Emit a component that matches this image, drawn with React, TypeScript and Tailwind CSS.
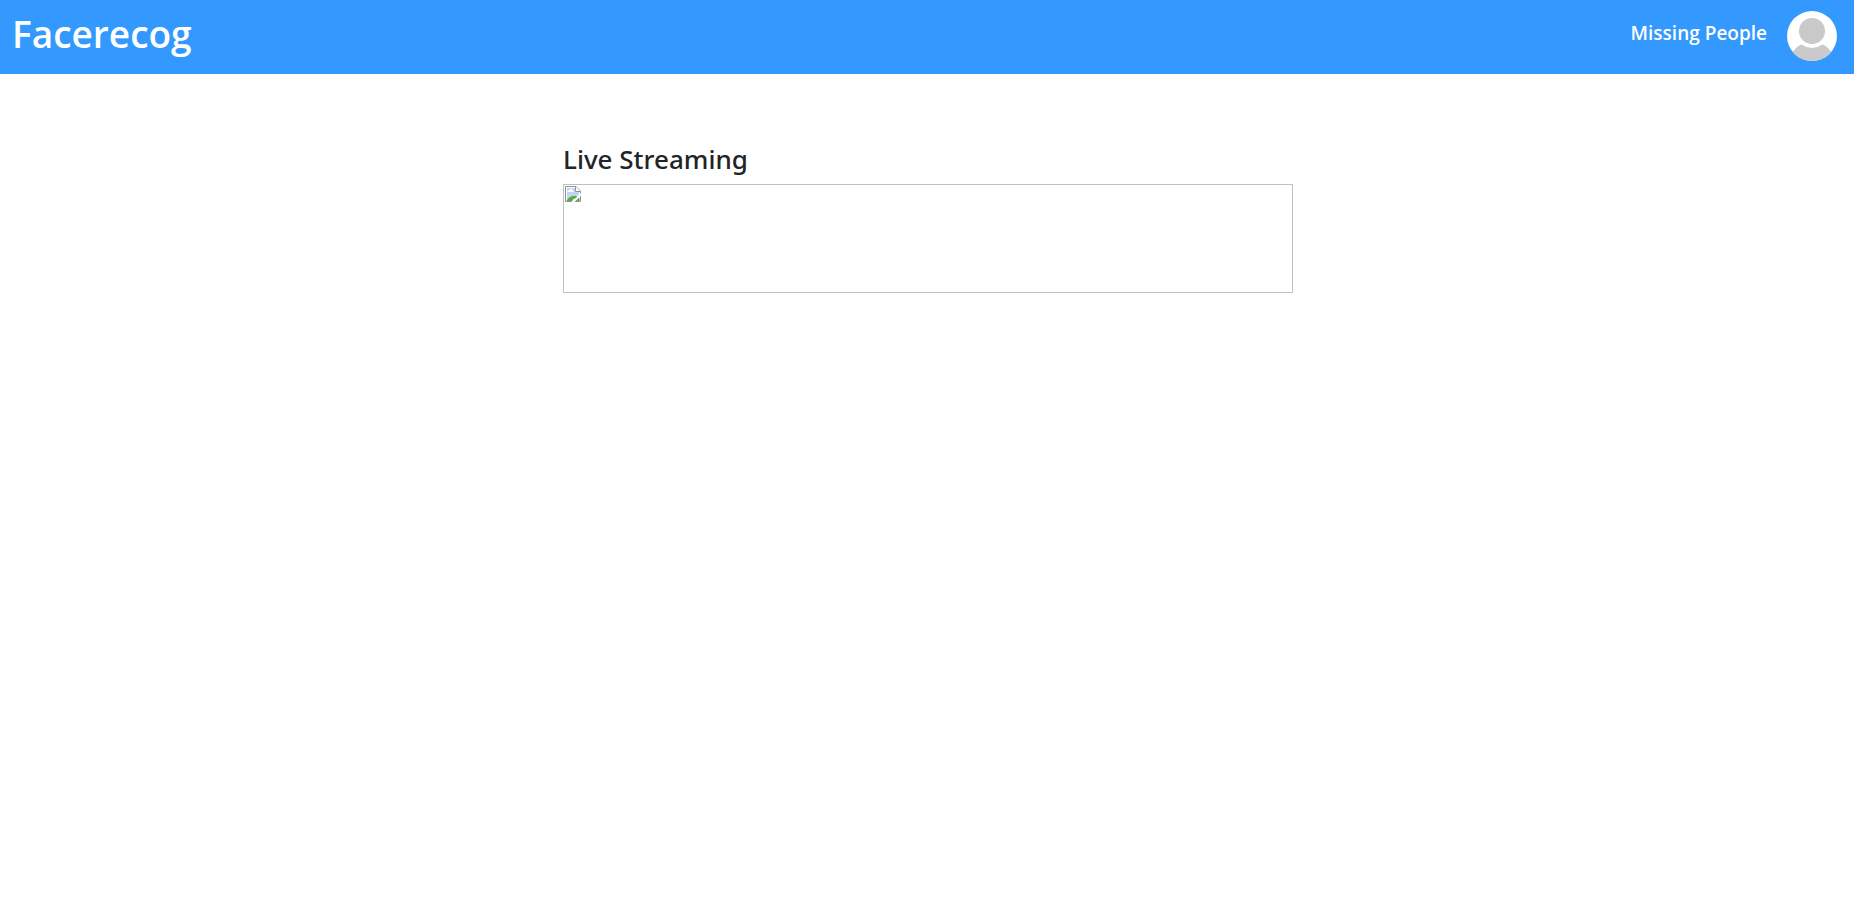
import React from "react";

function Avatar() {
  return (
    <svg viewBox="0 0 50 50" className="size-[50px]" role="img" aria-label="Profile">
      <defs>
        <clipPath id="avatar-clip">
          <circle cx="25" cy="25" r="25" />
        </clipPath>
      </defs>
      <g clipPath="url(#avatar-clip)">
        <rect width="50" height="50" fill="#fff" />
        <path
          d="M3 46 C6 39 10 35.5 14.5 33.5 Q25 40.5 35.5 33.5 C40 35.5 44 39 47 46 V50 H3 Z"
          fill="#c9c9c9"
        />
        <circle cx="25" cy="20" r="13" fill="#c9c9c9" />
      </g>
    </svg>
  );
}

function BrokenImageIcon() {
  return (
    <svg viewBox="0 0 16 16" className="size-4" aria-hidden="true">
      <path d="M0.5 0.5H11L15.5 5V15.5H0.5Z" fill="#fff" stroke="#929292" />
      <path d="M2 2H10V6H14V14H2Z" fill="#c3d5f7" />
      <path d="M2.5 6C2.2 4.6 3.6 4 4.4 4.4C4.8 2.6 7.2 2.8 7.4 4.4C8.6 4.4 8.8 6 8 6Z" fill="#fff" />
      <path d="M1.5 15C3 12 6 9.8 9 9.8C11.5 9.8 13 11 14.5 12V15Z" fill="#56ad3a" />
      <path d="M10.5 0.5V5.5H15.5" fill="#fff" stroke="#929292" />
      <path d="M16 7L13 9.5L11 12L8.5 13L6.5 16H9.5L12.5 13L16 9.5Z" fill="#fff" />
    </svg>
  );
}

export default function App() {
  return (
    <div className="min-h-screen bg-white font-['Noto_Sans','Open_Sans',sans-serif] text-[#212529]">
      <header className="flex h-[74px] items-center justify-between bg-[#3399ff] pr-[17px] pl-3 font-['Open_Sans','Noto_Sans',sans-serif] font-semibold text-white">
        <h1 className="pb-1.5 text-[37px] leading-12">Facerecog</h1>
        <nav className="flex items-center gap-5 pb-0.5">
          <a href="#missing-people" className="pb-1.5 text-[19px] leading-6">
            Missing People
          </a>
          <a href="#profile">
            <Avatar />
          </a>
        </nav>
      </header>
      <main className="mx-auto w-full max-w-[732px] pt-[68px] pl-0.5">
        <h2 className="mb-2 text-[26px] leading-[34px] font-medium">Live Streaming</h2>
        <div className="h-[109px] border border-[#c0c0c0] p-px" role="img" aria-label="Live stream">
          <BrokenImageIcon />
        </div>
      </main>
    </div>
  );
}
